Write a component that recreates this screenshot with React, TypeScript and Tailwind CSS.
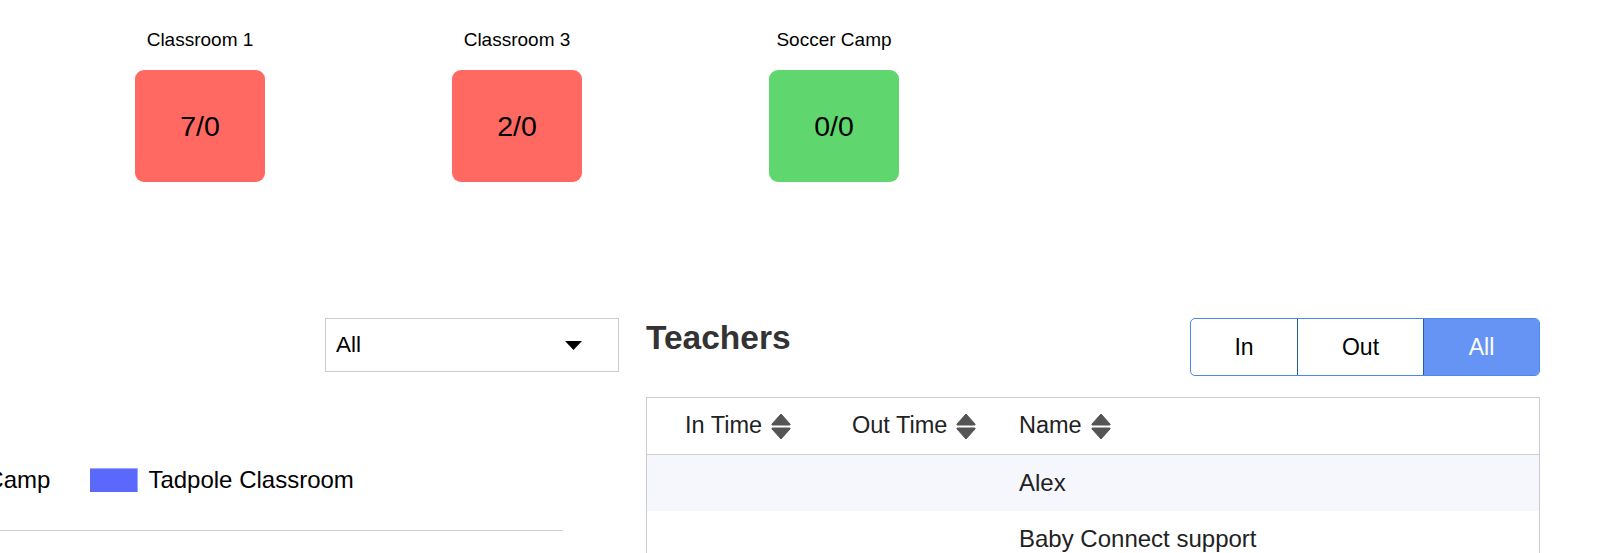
import React from 'react';

const rooms = [
  { name: 'Classroom 1', count: '7/0', color: 'bg-[#ff6961]' },
  { name: 'Classroom 3', count: '2/0', color: 'bg-[#ff6961]' },
  { name: 'Soccer Camp', count: '0/0', color: 'bg-[#5fd76e]' },
];

const teachers = ['Alex', 'Baby Connect support', 'Carla'];

const SortIcon = () => (
  <svg width="20" height="27" viewBox="0 0 20 27" className="shrink-0">
    <path d="M10 1 L19 11 Q19.5 12 18.5 12 H1.5 Q0.5 12 1 11 Z" fill="#555" stroke="#555" strokeLinejoin="round" />
    <path d="M10 26 L19 16 Q19.5 15 18.5 15 H1.5 Q0.5 15 1 16 Z" fill="#555" stroke="#555" strokeLinejoin="round" />
  </svg>
);

const HeaderCell = ({ label, pad }: { label: string; pad: string }) => (
  <div className={`flex items-center gap-[9px] ${pad}`}>
    <span>{label}</span>
    <SortIcon />
  </div>
);

export default function App() {
  return (
    <div className="w-[1600px] h-[553px] overflow-hidden bg-white text-black font-['Liberation_Sans',Arial,sans-serif]">
      {/* room tiles */}
      <div className="flex pl-[135px] pt-[29px] gap-[187px]">
        {rooms.map((r) => (
          <div key={r.name} className="flex flex-col items-center w-[130px]">
            <div className="text-[19px] leading-[22px] whitespace-nowrap">{r.name}</div>
            <div className={`mt-[19px] w-[130px] h-[112px] rounded-[9px] flex items-center justify-center text-[28.5px] ${r.color}`}>
              {r.count}
            </div>
          </div>
        ))}
      </div>

      <div className="flex mt-[136px]">
        {/* left: chart filter + legend */}
        <div className="w-[619px] flex flex-col shrink-0">
          <div className="self-end w-[294px] h-[54px] border border-[#cccccc] flex items-center justify-between pl-[10px] pr-[36px]">
            <span className="text-[22.5px]">All</span>
            <svg width="17" height="9" viewBox="0 0 17 9">
              <path d="M0 0 H17 L8.5 9 Z" fill="#000" />
            </svg>
          </div>
          <div className="mt-[96px] h-[24px] flex items-center -ml-[154px] text-[24px] whitespace-nowrap">
            <div className="w-[48px] h-[24px] bg-[#5fd76e]" />
            <span className="ml-[11px]">Soccer Camp</span>
            <div className="ml-[40px] w-[48px] h-[24px] bg-[#5a69fc] border-t border-r border-[#9ea7ff]" />
            <span className="ml-[10px]">Tadpole Classroom</span>
          </div>
          <div className="mt-[38px] w-[563px] border-t border-[#cccccc]" />
        </div>

        {/* right: teachers */}
        <div className="ml-[27px] w-[894px] shrink-0">
          <div className="flex justify-between items-start">
            <h2 className="text-[33.5px] leading-[40px] font-bold text-[#333]">Teachers</h2>
            <div className="flex h-[58px] border border-[#4d87ea] rounded-[5px] overflow-hidden text-[23px]">
              <div className="w-[107px] flex items-center justify-center border-r border-[#1f5fa6]">In</div>
              <div className="w-[126px] flex items-center justify-center border-r border-[#1f5fa6]">Out</div>
              <div className="w-[115px] flex items-center justify-center bg-[#6694f5] text-white">All</div>
            </div>
          </div>

          <div className="mt-[21px] border border-[#cccccc] text-[#222]">
            <div className="grid grid-cols-[165px_167px_1fr] h-[57px] border-b border-[#cccccc] items-center text-[23.5px]">
              <HeaderCell label="In Time" pad="pl-[38px]" />
              <HeaderCell label="Out Time" pad="pl-[40px]" />
              <HeaderCell label="Name" pad="pl-[40px]" />
            </div>
            {teachers.map((t, i) => (
              <div
                key={t}
                className={`grid grid-cols-[165px_167px_1fr] h-[56px] items-center text-[24px] ${i % 2 === 0 ? 'bg-[#f6f7fc]' : 'bg-white'}`}
              >
                <div />
                <div />
                <div className="pl-[40px]">{t}</div>
              </div>
            ))}
          </div>
        </div>
      </div>
    </div>
  );
}
